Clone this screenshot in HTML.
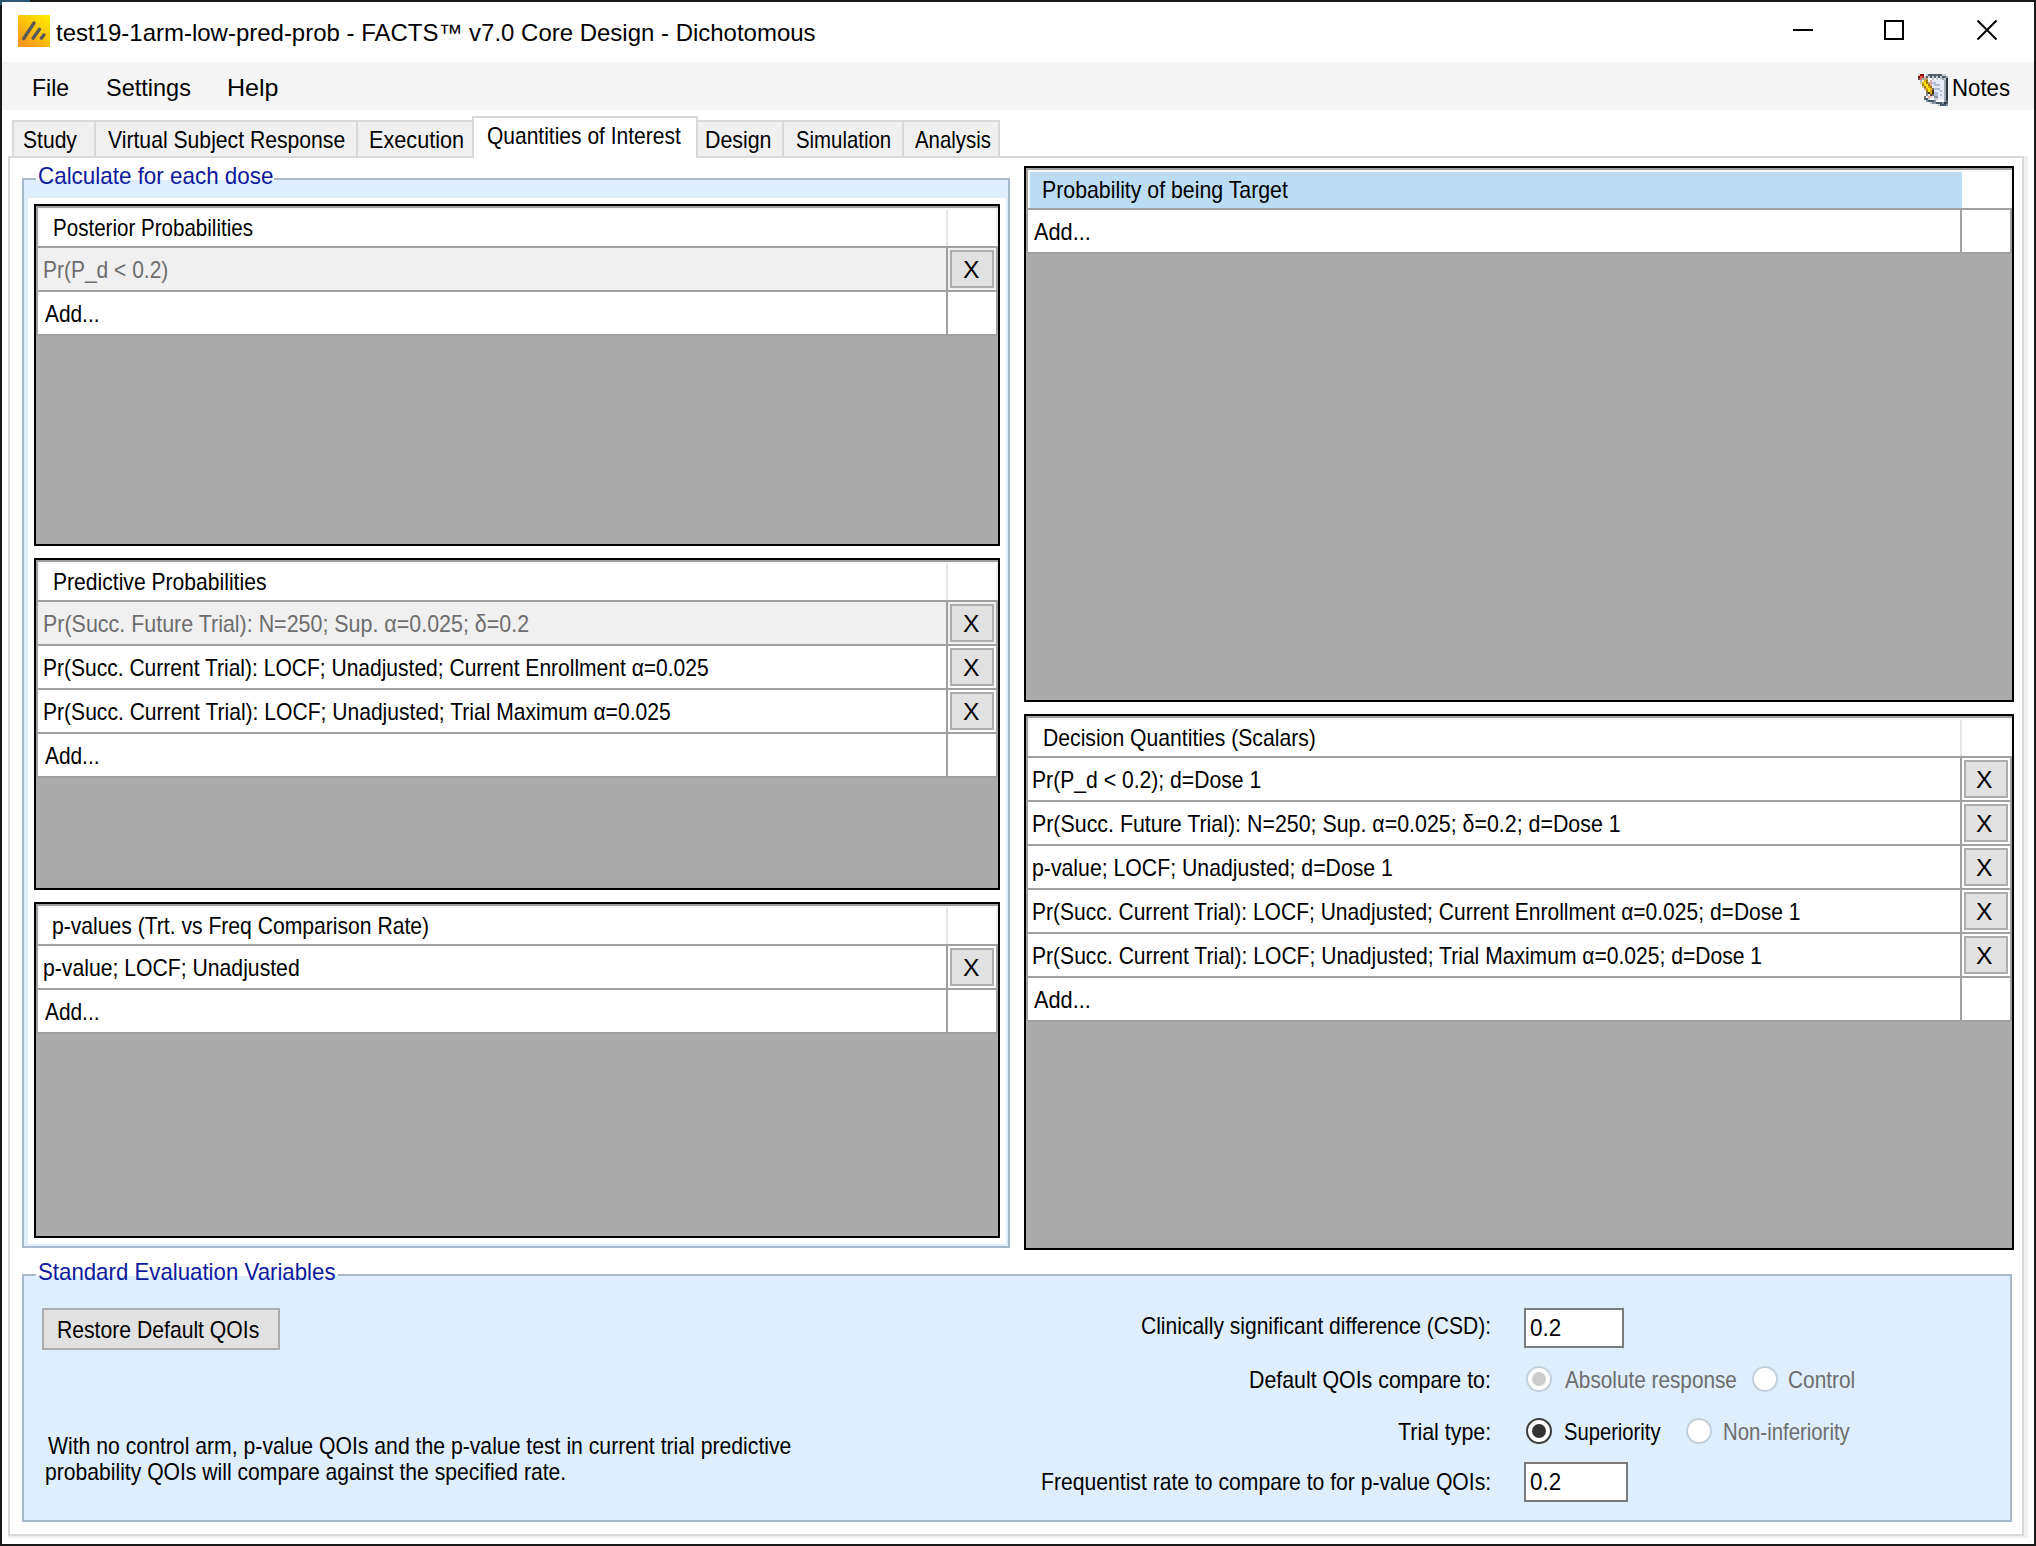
<!DOCTYPE html>
<html><head><meta charset="utf-8"><title>FACTS Core Design - Quantities of Interest</title>
<style>
html,body{margin:0;padding:0;background:#fff;}
body{width:2036px;height:1546px;position:relative;overflow:hidden;font-family:"Liberation Sans",sans-serif;}
*{box-sizing:border-box;}
.a{position:absolute;}
.t{position:absolute;white-space:pre;line-height:30px;transform-origin:0 0;font-family:"Liberation Sans",sans-serif;}
.grid{position:absolute;background:#ababab;border:2px solid #000;overflow:hidden;}
.grid .in{position:absolute;left:2px;top:2px;right:0;bottom:0;}
.hd{position:absolute;left:0;top:0;right:0;height:38px;background:#fff;box-shadow:-2px 0 0 #a0a0a0,0 -2px 0 #a0a0a0,-2px -2px 0 #a0a0a0;border-right:2px solid #f0f0f0;border-left:2px solid #f7f7f7;border-top:2px solid #f7f7f7;}
.hd.sel i{position:absolute;left:0;top:0;bottom:0;right:48px;background:#bcdcf4;}
.hd b{position:absolute;right:48px;top:0;bottom:0;width:2px;background:#e5e5e5;}
.hl{position:absolute;left:-2px;right:0;top:38px;height:2px;background:#a0a0a0;}
.row{position:absolute;left:0;right:0;height:44px;background:#fff;box-shadow:-2px 0 0 #a0a0a0;border-bottom:2px solid #a0a0a0;border-right:2px solid #a0a0a0;}
.row.dis{background:#f0f0f0;}
.row b{position:absolute;right:48px;top:0;bottom:0;width:2px;background:#a0a0a0;}
.row u{position:absolute;text-decoration:none;right:2px;top:2px;width:44px;height:38px;background:#e1e1e1;border:2px solid #adadad;}
.gb{position:absolute;border:2px solid #a6b8cb;background:#deeefd;}
.radio{position:absolute;width:26px;height:26px;border-radius:50%;background:#fff;border:2px solid #3c3c3c;}
.radio.dis{border-color:#c3cfdb;}
.radio i{position:absolute;left:4px;top:4px;width:14px;height:14px;border-radius:50%;background:#333;}
.radio.dis i{background:#ccc;}
.inp{position:absolute;background:#fff;border:2px solid #7a7a7a;}
</style></head>
<body>
<!-- window frame -->
<div class="a" style="left:0;top:0;width:2036px;height:1546px;border:2px solid #181818;"></div>
<div class="a" style="left:0;top:0;width:30px;height:2px;background:#2a5877;"></div>
<div class="a" style="left:0;top:0;width:2px;height:5px;background:#2a5877;"></div>
<!-- title bar -->
<svg class="a" style="left:18px;top:15px" width="32" height="32" viewBox="0 0 32 32">
 <defs><linearGradient id="ig" x1="1" y1="0" x2="0.2" y2="1"><stop offset="0" stop-color="#fff000"/><stop offset="0.5" stop-color="#fbc50e"/><stop offset="1" stop-color="#f7931e"/></linearGradient></defs>
 <rect width="32" height="32" fill="url(#ig)"/>
 <g stroke="#58585a" stroke-width="3.3" stroke-linecap="round"><line x1="5.7" y1="23.7" x2="16" y2="8"/><line x1="15" y1="23.3" x2="21.5" y2="14.3"/><line x1="23.3" y1="23.3" x2="25.9" y2="19.9"/></g>
</svg>
<svg class="a" style="left:1780px;top:10px" width="230" height="40" viewBox="1780 10 230 40" fill="none" stroke="#000" stroke-width="2">
 <line x1="1793" y1="30" x2="1813" y2="30"/>
 <rect x="1885" y="21" width="18" height="18"/>
 <path d="M1977.5 20.500 L1996.5 39.500 M1996.5 20.500 L1977.500 39.500"/>
</svg>
<!-- menu bar -->
<div class="a" style="left:2px;top:62px;width:2032px;height:48px;background:#f5f5f5;"></div>
<svg class="a" style="left:1918px;top:74px" width="32" height="32" viewBox="0 0 16 16" shape-rendering="crispEdges"><rect x="0" y="0" width="1" height="1" fill="#ecc8c8"/><rect x="1" y="0" width="2" height="1" fill="#841410"/><rect x="4" y="0" width="1" height="1" fill="#c4ccd4"/><rect x="5" y="0" width="1" height="1" fill="#5c6670"/><rect x="6" y="0" width="1" height="1" fill="#485868"/><rect x="7" y="0" width="1" height="1" fill="#5c6670"/><rect x="8" y="0" width="1" height="1" fill="#485868"/><rect x="9" y="0" width="1" height="1" fill="#5c6670"/><rect x="10" y="0" width="1" height="1" fill="#485868"/><rect x="11" y="0" width="1" height="1" fill="#5c6670"/><rect x="12" y="0" width="2" height="1" fill="#c4ccd4"/><rect x="0" y="1" width="1" height="1" fill="#841410"/><rect x="1" y="1" width="1" height="1" fill="#f85848"/><rect x="2" y="1" width="1" height="1" fill="#b83028"/><rect x="3" y="1" width="1" height="1" fill="#c4ccd4"/><rect x="4" y="1" width="1" height="1" fill="#5c6670"/><rect x="5" y="1" width="1" height="1" fill="#c4ccd4"/><rect x="6" y="1" width="1" height="1" fill="#485868"/><rect x="7" y="1" width="1" height="1" fill="#c4ccd4"/><rect x="8" y="1" width="1" height="1" fill="#5c6670"/><rect x="9" y="1" width="1" height="1" fill="#c4ccd4"/><rect x="10" y="1" width="1" height="1" fill="#485868"/><rect x="11" y="1" width="1" height="1" fill="#c4ccd4"/><rect x="12" y="1" width="1" height="1" fill="#485868"/><rect x="13" y="1" width="1" height="1" fill="#5c6670"/><rect x="14" y="1" width="1" height="1" fill="#a0a8b0"/><rect x="0" y="2" width="1" height="1" fill="#705050"/><rect x="1" y="2" width="1" height="1" fill="#e07068"/><rect x="2" y="2" width="1" height="1" fill="#a8b8c8"/><rect x="3" y="2" width="2" height="1" fill="#b8a070"/><rect x="5" y="2" width="2" height="1" fill="#ffffff"/><rect x="7" y="2" width="1" height="1" fill="#c4ccd4"/><rect x="8" y="2" width="1" height="1" fill="#ffffff"/><rect x="9" y="2" width="1" height="1" fill="#c4ccd4"/><rect x="10" y="2" width="1" height="1" fill="#ffffff"/><rect x="11" y="2" width="1" height="1" fill="#c4ccd4"/><rect x="12" y="2" width="1" height="1" fill="#a0a8b0"/><rect x="13" y="2" width="1" height="1" fill="#c4ccd4"/><rect x="14" y="2" width="1" height="1" fill="#2c3640"/><rect x="1" y="3" width="1" height="1" fill="#a8b8c8"/><rect x="2" y="3" width="1" height="1" fill="#f8ecc0"/><rect x="3" y="3" width="1" height="1" fill="#e0a808"/><rect x="4" y="3" width="1" height="1" fill="#a07808"/><rect x="5" y="3" width="1" height="1" fill="#ffffff"/><rect x="6" y="3" width="1" height="1" fill="#e8a4a4"/><rect x="7" y="3" width="6" height="1" fill="#e4eaf6"/><rect x="13" y="3" width="1" height="1" fill="#a0a8b0"/><rect x="14" y="3" width="1" height="1" fill="#2c3640"/><rect x="1" y="4" width="1" height="1" fill="#d8c8a0"/><rect x="2" y="4" width="1" height="1" fill="#e0a808"/><rect x="3" y="4" width="1" height="1" fill="#ffe418"/><rect x="4" y="4" width="1" height="1" fill="#a07808"/><rect x="5" y="4" width="1" height="1" fill="#b8a070"/><rect x="6" y="4" width="1" height="1" fill="#e8a4a4"/><rect x="7" y="4" width="2" height="1" fill="#aebcd4"/><rect x="9" y="4" width="4" height="1" fill="#e4eaf6"/><rect x="13" y="4" width="1" height="1" fill="#a0a8b0"/><rect x="14" y="4" width="1" height="1" fill="#2c3640"/><rect x="2" y="5" width="1" height="1" fill="#a07808"/><rect x="3" y="5" width="2" height="1" fill="#ffe418"/><rect x="5" y="5" width="1" height="1" fill="#a07808"/><rect x="6" y="5" width="1" height="1" fill="#e8a4a4"/><rect x="7" y="5" width="1" height="1" fill="#e4eaf6"/><rect x="8" y="5" width="3" height="1" fill="#aebcd4"/><rect x="11" y="5" width="2" height="1" fill="#e4eaf6"/><rect x="13" y="5" width="1" height="1" fill="#a0a8b0"/><rect x="14" y="5" width="1" height="1" fill="#2c3640"/><rect x="2" y="6" width="1" height="1" fill="#d8c8a0"/><rect x="3" y="6" width="1" height="1" fill="#a07808"/><rect x="4" y="6" width="1" height="1" fill="#ffe418"/><rect x="5" y="6" width="1" height="1" fill="#e0a808"/><rect x="6" y="6" width="1" height="1" fill="#a07808"/><rect x="7" y="6" width="6" height="1" fill="#e4eaf6"/><rect x="13" y="6" width="1" height="1" fill="#a0a8b0"/><rect x="14" y="6" width="1" height="1" fill="#2c3640"/><rect x="3" y="7" width="1" height="1" fill="#b8a070"/><rect x="4" y="7" width="1" height="1" fill="#e0a808"/><rect x="5" y="7" width="1" height="1" fill="#ffe418"/><rect x="6" y="7" width="1" height="1" fill="#e0a808"/><rect x="7" y="7" width="1" height="1" fill="#787868"/><rect x="8" y="7" width="3" height="1" fill="#aebcd4"/><rect x="11" y="7" width="2" height="1" fill="#e4eaf6"/><rect x="13" y="7" width="1" height="1" fill="#a0a8b0"/><rect x="14" y="7" width="1" height="1" fill="#2c3640"/><rect x="4" y="8" width="1" height="1" fill="#a07808"/><rect x="5" y="8" width="1" height="1" fill="#ffe418"/><rect x="6" y="8" width="1" height="1" fill="#e0a808"/><rect x="7" y="8" width="1" height="1" fill="#403010"/><rect x="8" y="8" width="3" height="1" fill="#e4eaf6"/><rect x="11" y="8" width="1" height="1" fill="#aebcd4"/><rect x="12" y="8" width="1" height="1" fill="#e4eaf6"/><rect x="13" y="8" width="1" height="1" fill="#a0a8b0"/><rect x="14" y="8" width="1" height="1" fill="#2c3640"/><rect x="4" y="9" width="1" height="1" fill="#787868"/><rect x="5" y="9" width="1" height="1" fill="#403010"/><rect x="6" y="9" width="1" height="1" fill="#e0a808"/><rect x="7" y="9" width="1" height="1" fill="#403010"/><rect x="8" y="9" width="2" height="1" fill="#aebcd4"/><rect x="10" y="9" width="3" height="1" fill="#e4eaf6"/><rect x="13" y="9" width="1" height="1" fill="#a0a8b0"/><rect x="14" y="9" width="1" height="1" fill="#2c3640"/><rect x="4" y="10" width="1" height="1" fill="#9090a8"/><rect x="5" y="10" width="1" height="1" fill="#ffffff"/><rect x="6" y="10" width="1" height="1" fill="#604050"/><rect x="7" y="10" width="1" height="1" fill="#787868"/><rect x="8" y="10" width="2" height="1" fill="#aebcd4"/><rect x="10" y="10" width="1" height="1" fill="#e4eaf6"/><rect x="11" y="10" width="1" height="1" fill="#aebcd4"/><rect x="12" y="10" width="1" height="1" fill="#e4eaf6"/><rect x="13" y="10" width="1" height="1" fill="#a0a8b0"/><rect x="14" y="10" width="1" height="1" fill="#2c3640"/><rect x="3" y="11" width="1" height="1" fill="#787868"/><rect x="4" y="11" width="1" height="1" fill="#ffffff"/><rect x="5" y="11" width="1" height="1" fill="#e8a4a4"/><rect x="6" y="11" width="1" height="1" fill="#ecc8c8"/><rect x="7" y="11" width="1" height="1" fill="#e4eaf6"/><rect x="8" y="11" width="2" height="1" fill="#9090a8"/><rect x="10" y="11" width="3" height="1" fill="#e4eaf6"/><rect x="13" y="11" width="1" height="1" fill="#a0a8b0"/><rect x="14" y="11" width="1" height="1" fill="#2c3640"/><rect x="3" y="12" width="1" height="1" fill="#5c6670"/><rect x="4" y="12" width="1" height="1" fill="#485868"/><rect x="5" y="12" width="1" height="1" fill="#c4ccd4"/><rect x="6" y="12" width="2" height="1" fill="#ffffff"/><rect x="8" y="12" width="2" height="1" fill="#c4ccd4"/><rect x="10" y="12" width="3" height="1" fill="#e4eaf6"/><rect x="13" y="12" width="1" height="1" fill="#a0a8b0"/><rect x="14" y="12" width="1" height="1" fill="#2c3640"/><rect x="4" y="13" width="1" height="1" fill="#8090a0"/><rect x="5" y="13" width="3" height="1" fill="#485868"/><rect x="8" y="13" width="1" height="1" fill="#8090a0"/><rect x="9" y="13" width="4" height="1" fill="#ffffff"/><rect x="13" y="13" width="1" height="1" fill="#a0a8b0"/><rect x="14" y="13" width="1" height="1" fill="#485868"/><rect x="6" y="14" width="1" height="1" fill="#c4ccd4"/><rect x="7" y="14" width="2" height="1" fill="#8090a0"/><rect x="9" y="14" width="3" height="1" fill="#485868"/><rect x="12" y="14" width="1" height="1" fill="#8090a0"/><rect x="13" y="14" width="1" height="1" fill="#2c3640"/><rect x="14" y="14" width="1" height="1" fill="#485868"/><rect x="10" y="15" width="1" height="1" fill="#c4ccd4"/><rect x="11" y="15" width="3" height="1" fill="#485868"/><rect x="14" y="15" width="1" height="1" fill="#8090a0"/></svg>
<!-- tab page -->
<div class="a" style="left:8px;top:156px;width:2020px;height:1382px;background:#f0f0f0;"></div>
<div class="a" style="left:8px;top:156px;width:2016px;height:1380px;background:#fff;border:2px solid #d9d9d9;"></div>
<!-- tabs -->
<div class="a" style="left:12px;top:120px;width:988px;height:36px;background:#f0f0f0;border:2px solid #d9d9d9;border-bottom:none;"></div>
<div class="a" style="left:94px;top:122px;width:2px;height:34px;background:#d9d9d9;"></div>
<div class="a" style="left:356px;top:122px;width:2px;height:34px;background:#d9d9d9;"></div>
<div class="a" style="left:782px;top:122px;width:2px;height:34px;background:#d9d9d9;"></div>
<div class="a" style="left:902px;top:122px;width:2px;height:34px;background:#d9d9d9;"></div>
<div class="a" style="left:472px;top:116px;width:226px;height:42px;background:#fff;border:2px solid #d9d9d9;border-bottom:none;"></div>
<!-- group box 1 -->
<div class="gb" style="left:22px;top:178px;width:988px;height:1070px;"></div>
<div class="a" style="left:28px;top:198px;width:978px;height:1046px;background:#fff;"></div>
<div class="a" style="left:36px;top:160px;width:238px;height:20px;background:#fff;"></div>
<div class="a" style="left:36px;top:180px;width:238px;height:10px;background:#deeefd;"></div>
<!-- group box 2 -->
<div class="gb" style="left:22px;top:1274px;width:1990px;height:248px;"></div>
<div class="a" style="left:36px;top:1256px;width:302px;height:20px;background:#fff;"></div>
<div class="a" style="left:36px;top:1276px;width:302px;height:10px;background:#deeefd;"></div>
<div class="grid" style="left:34px;top:204px;width:966px;height:342px;"><div class="in"><div class="hd"><b></b></div><div class="hl"></div><div class="row dis" style="top:40px"><b></b><u></u></div><div class="row" style="top:84px"><b></b></div></div></div>
<div class="grid" style="left:34px;top:558px;width:966px;height:332px;"><div class="in"><div class="hd"><b></b></div><div class="hl"></div><div class="row dis" style="top:40px"><b></b><u></u></div><div class="row" style="top:84px"><b></b><u></u></div><div class="row" style="top:128px"><b></b><u></u></div><div class="row" style="top:172px"><b></b></div></div></div>
<div class="grid" style="left:34px;top:902px;width:966px;height:336px;"><div class="in"><div class="hd"><b></b></div><div class="hl"></div><div class="row" style="top:40px"><b></b><u></u></div><div class="row" style="top:84px"><b></b></div></div></div>
<div class="grid" style="left:1024px;top:166px;width:990px;height:536px;"><div class="in"><div class="hd sel"><i></i></div><div class="hl"></div><div class="row" style="top:40px"><b></b></div></div></div>
<div class="grid" style="left:1024px;top:714px;width:990px;height:536px;"><div class="in"><div class="hd"><b></b></div><div class="hl"></div><div class="row" style="top:40px"><b></b><u></u></div><div class="row" style="top:84px"><b></b><u></u></div><div class="row" style="top:128px"><b></b><u></u></div><div class="row" style="top:172px"><b></b><u></u></div><div class="row" style="top:216px"><b></b><u></u></div><div class="row" style="top:260px"><b></b></div></div></div>
<!-- bottom controls -->
<div class="a" style="left:42px;top:1308px;width:238px;height:42px;background:#e1e1e1;border:2px solid #adadad;"></div>
<div class="inp" style="left:1524px;top:1308px;width:100px;height:40px;"></div>
<div class="inp" style="left:1524px;top:1462px;width:104px;height:40px;"></div>
<div class="radio dis" style="left:1526px;top:1366px;"><i></i></div>
<div class="radio dis" style="left:1752px;top:1366px;"></div>
<div class="radio" style="left:1526px;top:1418px;"><i></i></div>
<div class="radio dis" style="left:1686px;top:1418px;"></div>
<span class="t" style="left:55.70px;top:17.7px;font-size:24px;color:#000;transform:scaleX(0.9991)">test19-1arm-low-pred-prob - FACTS™ v7.0 Core Design - Dichotomous</span>
<span class="t" style="left:31.58px;top:72.5px;font-size:24px;color:#000;transform:scaleX(0.9583)">File</span>
<span class="t" style="left:105.82px;top:72.5px;font-size:24px;color:#000;transform:scaleX(0.9788)">Settings</span>
<span class="t" style="left:226.51px;top:72.5px;font-size:24px;color:#000;transform:scaleX(1.0447)">Help</span>
<span class="t" style="left:1952.15px;top:72.5px;font-size:24px;color:#000;transform:scaleX(0.9267)">Notes</span>
<span class="t" style="left:23.42px;top:124.5px;font-size:24px;color:#000;transform:scaleX(0.8783)">Study</span>
<span class="t" style="left:108.30px;top:124.5px;font-size:24px;color:#000;transform:scaleX(0.8817)">Virtual Subject Response</span>
<span class="t" style="left:368.60px;top:124.5px;font-size:24px;color:#000;transform:scaleX(0.9020)">Execution</span>
<span class="t" style="left:486.62px;top:120.5px;font-size:24px;color:#000;transform:scaleX(0.8750)">Quantities of Interest</span>
<span class="t" style="left:705.22px;top:124.5px;font-size:24px;color:#000;transform:scaleX(0.8901)">Design</span>
<span class="t" style="left:796.15px;top:124.5px;font-size:24px;color:#000;transform:scaleX(0.8491)">Simulation</span>
<span class="t" style="left:915.20px;top:124.5px;font-size:24px;color:#000;transform:scaleX(0.8494)">Analysis</span>
<span class="t" style="left:37.67px;top:160.5px;font-size:24px;color:#0c1a9c;transform:scaleX(0.9336)">Calculate for each dose</span>
<span class="t" style="left:37.77px;top:1256.5px;font-size:24px;color:#0c1a9c;transform:scaleX(0.9266)">Standard Evaluation Variables</span>
<span class="t" style="left:52.79px;top:212.5px;font-size:24px;color:#000;transform:scaleX(0.8567)">Posterior Probabilities</span>
<span class="t" style="left:43.25px;top:254.5px;font-size:24px;color:#6d6d6d;transform:scaleX(0.8736)">Pr(P_d &lt; 0.2)</span>
<span class="t" style="left:45.00px;top:298.5px;font-size:24px;color:#000;transform:scaleX(0.8689)">Add...</span>
<span class="t" style="left:52.64px;top:566.5px;font-size:24px;color:#000;transform:scaleX(0.8792)">Predictive Probabilities</span>
<span class="t" style="left:42.81px;top:608.5px;font-size:24px;color:#6d6d6d;transform:scaleX(0.8933)">Pr(Succ. Future Trial): N=250; Sup. α=0.025; δ=0.2</span>
<span class="t" style="left:42.85px;top:652.5px;font-size:24px;color:#000;transform:scaleX(0.8757)">Pr(Succ. Current Trial): LOCF; Unadjusted; Current Enrollment α=0.025</span>
<span class="t" style="left:42.84px;top:696.5px;font-size:24px;color:#000;transform:scaleX(0.8781)">Pr(Succ. Current Trial): LOCF; Unadjusted; Trial Maximum α=0.025</span>
<span class="t" style="left:45.00px;top:740.5px;font-size:24px;color:#000;transform:scaleX(0.8689)">Add...</span>
<span class="t" style="left:52.12px;top:910.5px;font-size:24px;color:#000;transform:scaleX(0.8798)">p-values (Trt. vs Freq Comparison Rate)</span>
<span class="t" style="left:42.92px;top:952.5px;font-size:24px;color:#000;transform:scaleX(0.8826)">p-value; LOCF; Unadjusted</span>
<span class="t" style="left:45.00px;top:996.5px;font-size:24px;color:#000;transform:scaleX(0.8689)">Add...</span>
<span class="t" style="left:1042.23px;top:174.5px;font-size:24px;color:#000;transform:scaleX(0.8873)">Probability of being Target</span>
<span class="t" style="left:1034.00px;top:216.5px;font-size:24px;color:#000;transform:scaleX(0.9066)">Add...</span>
<span class="t" style="left:1043.24px;top:722.5px;font-size:24px;color:#000;transform:scaleX(0.8817)">Decision Quantities (Scalars)</span>
<span class="t" style="left:1032.24px;top:764.5px;font-size:24px;color:#000;transform:scaleX(0.8809)">Pr(P_d &lt; 0.2); d=Dose 1</span>
<span class="t" style="left:1032.22px;top:808.5px;font-size:24px;color:#000;transform:scaleX(0.8906)">Pr(Succ. Future Trial): N=250; Sup. α=0.025; δ=0.2; d=Dose 1</span>
<span class="t" style="left:1032.11px;top:852.5px;font-size:24px;color:#000;transform:scaleX(0.8855)">p-value; LOCF; Unadjusted; d=Dose 1</span>
<span class="t" style="left:1032.25px;top:896.5px;font-size:24px;color:#000;transform:scaleX(0.8764)">Pr(Succ. Current Trial): LOCF; Unadjusted; Current Enrollment α=0.025; d=Dose 1</span>
<span class="t" style="left:1032.24px;top:940.5px;font-size:24px;color:#000;transform:scaleX(0.8779)">Pr(Succ. Current Trial): LOCF; Unadjusted; Trial Maximum α=0.025; d=Dose 1</span>
<span class="t" style="left:1034.00px;top:984.5px;font-size:24px;color:#000;transform:scaleX(0.9066)">Add...</span>
<span class="t" style="left:56.84px;top:1314.5px;font-size:24px;color:#000;transform:scaleX(0.8815)">Restore Default QOIs</span>
<span class="t" style="left:47.80px;top:1430.5px;font-size:24px;color:#000;transform:scaleX(0.8832)">With no control arm, p-value QOIs and the p-value test in current trial predictive</span>
<span class="t" style="left:45.02px;top:1456.5px;font-size:24px;color:#000;transform:scaleX(0.8800)">probability QOIs will compare against the specified rate.</span>
<span class="t" style="left:1140.62px;top:1310.5px;font-size:24px;color:#000;transform:scaleX(0.8758)">Clinically significant difference (CSD):</span>
<span class="t" style="left:1249.22px;top:1364.5px;font-size:24px;color:#000;transform:scaleX(0.8888)">Default QOIs compare to:</span>
<span class="t" style="left:1398.20px;top:1416.5px;font-size:24px;color:#000;transform:scaleX(0.8922)">Trial type:</span>
<span class="t" style="left:1040.74px;top:1466.5px;font-size:24px;color:#000;transform:scaleX(0.8811)">Frequentist rate to compare to for p-value QOIs:</span>
<span class="t" style="left:1529.56px;top:1312.5px;font-size:24px;color:#000;transform:scaleX(0.9355)">0.2</span>
<span class="t" style="left:1529.56px;top:1466.5px;font-size:24px;color:#000;transform:scaleX(0.9355)">0.2</span>
<span class="t" style="left:1564.60px;top:1364.5px;font-size:24px;color:#6d6d6d;transform:scaleX(0.8646)">Absolute response</span>
<span class="t" style="left:1787.93px;top:1364.5px;font-size:24px;color:#6d6d6d;transform:scaleX(0.8693)">Control</span>
<span class="t" style="left:1563.76px;top:1416.5px;font-size:24px;color:#000;transform:scaleX(0.8412)">Superiority</span>
<span class="t" style="left:1722.70px;top:1416.5px;font-size:24px;color:#6d6d6d;transform:scaleX(0.8486)">Non-inferiority</span>
<span class="t" style="left:962.97px;top:254.5px;font-size:24px;color:#000;transform:scaleX(1.0286)">X</span>
<span class="t" style="left:962.97px;top:608.5px;font-size:24px;color:#000;transform:scaleX(1.0286)">X</span>
<span class="t" style="left:962.97px;top:652.5px;font-size:24px;color:#000;transform:scaleX(1.0286)">X</span>
<span class="t" style="left:962.97px;top:696.5px;font-size:24px;color:#000;transform:scaleX(1.0286)">X</span>
<span class="t" style="left:962.97px;top:952.5px;font-size:24px;color:#000;transform:scaleX(1.0286)">X</span>
<span class="t" style="left:1975.97px;top:764.5px;font-size:24px;color:#000;transform:scaleX(1.0286)">X</span>
<span class="t" style="left:1975.97px;top:808.5px;font-size:24px;color:#000;transform:scaleX(1.0286)">X</span>
<span class="t" style="left:1975.97px;top:852.5px;font-size:24px;color:#000;transform:scaleX(1.0286)">X</span>
<span class="t" style="left:1975.97px;top:896.5px;font-size:24px;color:#000;transform:scaleX(1.0286)">X</span>
<span class="t" style="left:1975.97px;top:940.5px;font-size:24px;color:#000;transform:scaleX(1.0286)">X</span>
</body></html>
